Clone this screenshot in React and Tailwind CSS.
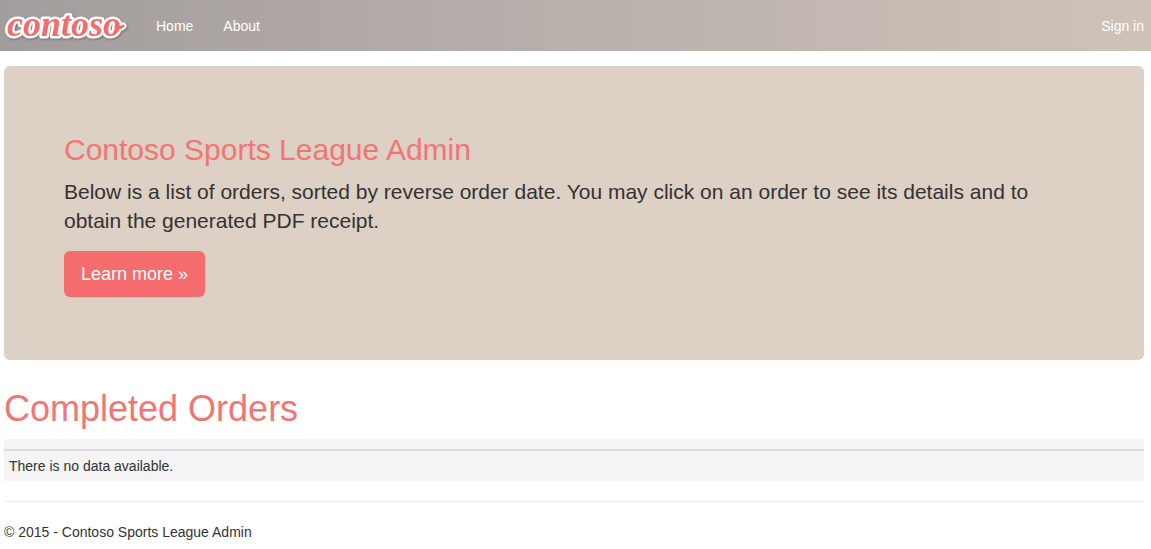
const navLinks = ["Home", "About"];

// Closing stroke of the wordmark's last letter.
const tail = "M112 26 Q116 29 119 26";

function Logo() {
  return (
    <a href="#" aria-label="contoso" className="block shrink-0">
      <svg
        width="132"
        height="51"
        viewBox="0 0 132 51"
        className="block drop-shadow-[1px_1px_1px_rgba(60,50,50,0.45)]"
      >
        <path d={tail} fill="none" stroke="#ffffff" strokeWidth="7" strokeLinecap="round" />
        <text
          x="3"
          y="36"
          fill="#f56c6c"
          stroke="#ffffff"
          strokeWidth="5"
          strokeLinejoin="round"
          paintOrder="stroke"
          fontFamily="'Liberation Serif', serif"
          fontSize="36"
          fontWeight="700"
          fontStyle="italic"
        >
          contoso
        </text>
        <path d={tail} fill="none" stroke="#f56c6c" strokeWidth="3" strokeLinecap="round" />
      </svg>
    </a>
  );
}

function Navbar() {
  return (
    <nav className="flex h-[51px] items-center bg-linear-to-r from-[#a29d9c] via-[#b9b0ac] to-[#cfc3b8] pr-[7px] pl-1 text-white">
      <Logo />
      <ul className="ml-5 flex gap-[30px]">
        {navLinks.map((label) => (
          <li key={label}>
            <a href="#">{label}</a>
          </li>
        ))}
      </ul>
      <a href="#" className="ml-auto">
        Sign in
      </a>
    </nav>
  );
}

function Hero() {
  return (
    <section className="rounded-md bg-[#ddd0c4] px-[60px] pt-[68px] pb-[63px]">
      <h1 className="text-[30px] leading-8 text-[#f37572]">Contoso Sports League Admin</h1>
      <p className="mt-[11px] mb-4 text-[21px] leading-[29px]">
        Below is a list of orders, sorted by reverse order date. You may click on an order to see
        its details and to obtain the generated PDF receipt.
      </p>
      <a
        href="#"
        className="inline-block rounded-md bg-[#f56c6c] px-[17px] py-[11px] text-lg leading-6 text-white"
      >
        Learn more »
      </a>
    </section>
  );
}

function Orders() {
  return (
    <section>
      <h2 className="mt-[29px] mb-[10px] text-[36px] leading-10 text-[#f37572]">
        Completed Orders
      </h2>
      <table className="w-full border-collapse bg-[#f4f4f4] text-left">
        <tbody>
          <tr className="h-[11px] border-b-2 border-[#dddddd]">
            <td className="p-0"></td>
          </tr>
          <tr>
            <td className="p-[5px]">There is no data available.</td>
          </tr>
        </tbody>
      </table>
    </section>
  );
}

export default function App() {
  return (
    <div className="bg-white font-['Liberation_Sans',Arial,sans-serif] text-sm leading-5 text-[#333333]">
      <Navbar />
      <main className="pt-[15px] pr-[7px] pl-1">
        <Hero />
        <Orders />
        <hr className="my-5 border-[#eeeeee]" />
        <footer>
          <p>© 2015 - Contoso Sports League Admin</p>
        </footer>
      </main>
    </div>
  );
}
